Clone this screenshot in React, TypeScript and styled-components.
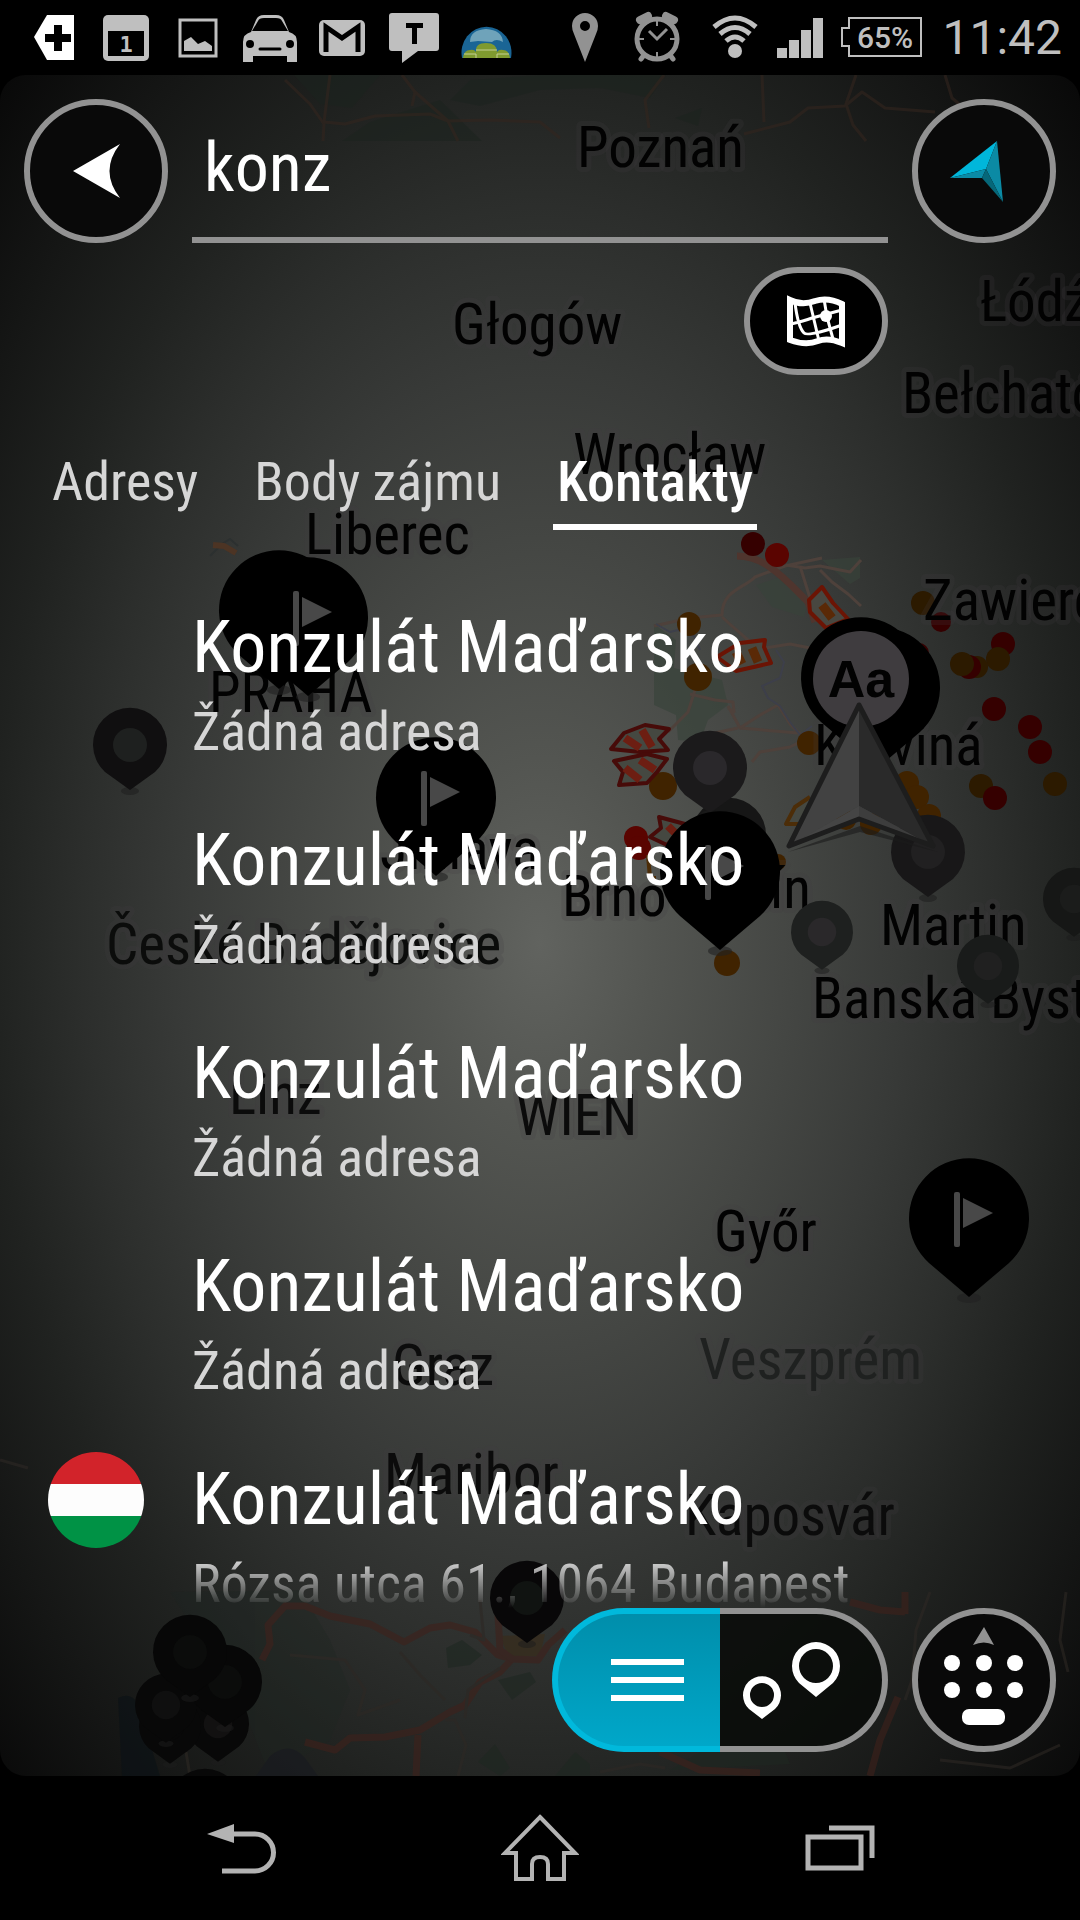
import React, { useState } from "react";
import styled, { createGlobalStyle, css } from "styled-components";

const GlobalStyle = createGlobalStyle`
  *, *::before, *::after { box-sizing: border-box; }
  html, body { margin: 0; background: #000; }
  button, input { font: inherit; color: inherit; margin: 0; }
`;

const CONDENSED = `"Roboto Condensed", Roboto, "Noto Sans", sans-serif`;
const GREY = "#929292";
const ICON = "#bfbfbf";

const Phone = styled.div`
  display: flex;
  flex-direction: column;
  height: 100vh;
  background: #000;
  color: #fff;
  font-family: ${CONDENSED};
  overflow: hidden;
`;

/* ---------- status bar ---------- */

const StatusBar = styled.header`
  display: flex;
  justify-content: space-between;
  align-items: center;
  height: 75px;
  padding: 0 18px;
`;

const StatusGroup = styled.div`
  display: flex;
  align-items: center;
`;

const StatusGlyph = styled.svg<{ $w?: number }>`
  display: block;
  width: ${(p) => p.$w ?? 72}px;
  height: 75px;
`;

const Clock = styled.time`
  margin-left: 20px;
  font: 400 48px/75px Roboto, sans-serif;
  color: ${ICON};
`;

/* ---------- app panel ---------- */

const Panel = styled.main`
  position: relative;
  isolation: isolate;
  display: flex;
  flex-direction: column;
  flex: 1;
  min-height: 0;
  padding: 24px;
  border-radius: 26px;
  overflow: hidden;
  background: radial-gradient(
    ellipse at 50% 51%,
    #61635f 0%,
    #535551 15%,
    #444643 33%,
    #383a38 47%,
    #2c2e2c 60%,
    #202220 72%,
    #151615 85%,
    #080808 100%
  );
`;

const MapCanvas = styled.svg`
  position: absolute;
  inset: 0;
  z-index: -1;
  width: 100%;
  height: 100%;
`;

const TopRow = styled.form`
  display: grid;
  grid-template-columns: 144px 1fr 144px;
  gap: 24px;
  margin: 0;
`;

const roundControl = css`
  display: flex;
  align-items: center;
  justify-content: center;
  padding: 0;
  border: 6px solid ${GREY};
  background: #090909;
  cursor: pointer;
`;

const RoundButton = styled.button`
  ${roundControl}
  width: 144px;
  height: 144px;
  border-radius: 50%;
`;

const SearchInput = styled.input`
  min-width: 0;
  height: 144px;
  padding: 0 12px;
  border: 0;
  border-bottom: 6px solid ${GREY};
  border-radius: 0;
  outline: 0;
  background: transparent;
  font-size: 68px;
`;

const MapButton = styled.button`
  ${roundControl}
  grid-column: 2;
  justify-self: end;
  width: 144px;
  height: 108px;
  border-radius: 54px;
  background: #000;
`;

const Tabs = styled.div`
  display: flex;
  gap: 48px;
  margin-top: 71px;
  padding-left: 24px;
`;

const Tab = styled.button`
  padding: 0 4px 6px;
  border: 0;
  border-bottom: 6px solid transparent;
  background: none;
  color: #d6d6d6;
  font-size: 54px;
  line-height: 72px;
  white-space: nowrap;
  cursor: pointer;

  &[aria-selected="true"] {
    color: #fff;
    font-size: 56px;
    font-weight: 500;
    border-color: #fff;
  }
`;

const Results = styled.ul`
  flex: 1;
  min-height: 0;
  margin: 0;
  padding: 70px 0 0;
  list-style: none;
  overflow: hidden;
  mask-image: linear-gradient(to top, transparent 0, #000 48px);
`;

const Result = styled.li`
  display: grid;
  grid-template-columns: 96px 1fr;
  column-gap: 48px;
  padding: 0 24px;
  margin-bottom: 45px;
`;

const Flag = styled.span<{ $bands?: string[] }>`
  grid-row: span 2;
  width: 96px;
  height: 96px;
  border-radius: 50%;
  ${(p) =>
    p.$bands &&
    css`
      background: linear-gradient(
        ${p.$bands[0]} 33%,
        ${p.$bands[1]} 33% 67%,
        ${p.$bands[2]} 67%
      );
    `}
`;

const Title = styled.span`
  font-size: 72px;
  line-height: 96px;
  white-space: nowrap;
`;

const Address = styled.span`
  color: #d6d6d6;
  font-size: 54px;
  line-height: 72px;
  white-space: nowrap;
`;

const BottomRow = styled.div`
  display: flex;
  justify-content: flex-end;
  gap: 24px;
`;

const Toggle = styled.div`
  display: flex;
`;

const ToggleHalf = styled.button<{ $side: "left" | "right" }>`
  display: flex;
  width: 168px;
  height: 144px;
  padding: 0;
  border: 6px solid ${GREY};
  background: rgba(8, 10, 8, 0.85);
  cursor: pointer;
  ${(p) =>
    p.$side === "left"
      ? "border-right: 0; border-radius: 72px 0 0 72px;"
      : "border-left: 0; border-radius: 0 72px 72px 0;"}

  &[aria-pressed="true"] {
    border-color: #00b9dc;
    background: linear-gradient(#008eab, #00a7c9);
  }
`;

const Drawing = styled.svg<{ $w: number; $h: number }>`
  display: block;
  flex: none;
  width: ${(p) => p.$w}px;
  height: ${(p) => p.$h}px;
`;

/* ---------- navigation bar ---------- */

const NavBar = styled.nav`
  display: flex;
  justify-content: center;
  height: 144px;
`;

const NavButton = styled.button`
  display: flex;
  align-items: center;
  justify-content: center;
  width: 300px;
  padding: 0;
  border: 0;
  background: none;
  cursor: pointer;
`;

/* ---------- map ---------- */

type PinProps = { x: number; y: number };

const FlagPin = ({ x, y, flag = true }: PinProps & { flag?: boolean }) => (
  <g transform={`translate(${x} ${y})`}>
    <ellipse cy="79" rx="12" ry="5" fill="#222" opacity=".6" />
    <path d="M0 78 L-40 44 A60 60 0 1 1 40 44 Z" fill="#000" />
    {flag && (
      <g fill="#484848">
        <rect x="-15" y="-27" width="6" height="55" rx="2" />
        <path d="M-6 -21 L24 -6 L-6 9 Z" />
      </g>
    )}
  </g>
);

const RingPin = ({ x, y, r = 37, fill, hole }: PinProps & { r?: number; fill: string; hole: string }) => (
  <g transform={`translate(${x} ${y}) scale(${r / 37})`}>
    <ellipse cy="46" rx="9" ry="4" fill="#1c1c1c" opacity=".5" />
    <path d="M0 45 L-25 27 A37 37 0 1 1 25 27 Z" fill={fill} />
    <circle r="17" fill={hole} />
  </g>
);

const RED = "#5a0400";
const DARKRED = "#350000";
const ORANGE = "#402300";
const BROWN = "#2c1a00";

const dots: [number, number, number, string][] = [
  [753, 544, 12, DARKRED], [777, 555, 12, RED], [689, 624, 12, ORANGE], [698, 677, 14, ORANGE],
  [663, 786, 14, ORANGE], [727, 963, 13, ORANGE], [923, 603, 12, BROWN], [941, 622, 10, DARKRED],
  [919, 653, 10, DARKRED], [1003, 644, 12, DARKRED], [998, 659, 12, BROWN], [977, 667, 11, BROWN],
  [969, 667, 12, DARKRED], [962, 664, 12, BROWN], [994, 709, 12, DARKRED], [1030, 727, 12, DARKRED],
  [1040, 752, 12, DARKRED], [1055, 784, 12, BROWN], [981, 786, 12, BROWN], [995, 798, 12, DARKRED],
  [809, 743, 12, ORANGE], [907, 783, 12, ORANGE], [917, 797, 12, ORANGE], [929, 816, 12, ORANGE],
  [871, 824, 11, ORANGE], [846, 820, 10, ORANGE], [636, 838, 12, RED], [639, 848, 12, RED], [778, 862, 8, ORANGE],
];

const cities: [string, number, number, string?][] = [
  ["Poznań", 577, 167], ["Głogów", 452, 344], ["Łódź", 980, 321], ["Bełchatów", 902, 413],
  ["Wrocław", 573, 474], ["Liberec", 305, 554], ["Zawiercie", 923, 620], ["PRAHA", 209, 712],
  ["Karviná", 814, 765], ["Jihlava", 380, 869], ["České Budějovice", 106, 964, "#0b0c0b"], ["Brno", 562, 916],
  ["Zlín", 727, 908], ["Martin", 880, 945], ["Banská Bystrica", 812, 1018], ["Linz", 229, 1114, "#0b0b0b"],
  ["WIEN", 516, 1135, "#0b0b0b"], ["Győr", 714, 1251], ["Veszprém", 699, 1379, "#1f2120"], ["Graz", 392, 1385, "#0c0c0c"],
  ["Maribor", 384, 1494, "#0b0b0b"], ["Kaposvár", 685, 1535, "#0b0b0b"],
];

const Roads = () => (
  <g fill="none" strokeLinejoin="round">
    {/* northern strip */}
    <g fill="#1b231e" opacity=".5">
      <path d="M294 75 L380 75 L352 108 L320 104 Z" />
      <path d="M450 100 L470 80 L540 75 L665 75 L650 98 L600 88 L540 90 L480 106 Z" />
      <path d="M342 141 L370 122 L440 100 L482 141 Z" />
      <path d="M675 118 L702 108 L698 126 Z" />
    </g>
    <g stroke="#33251e" strokeWidth="3" opacity=".6">
      <path d="M285 80 L310 104 L324 124 L323 141" />
      <path d="M330 75 L324 122 L345 124 L375 116 L430 114 L448 121 L490 120 L540 122 L560 138" />
      <path d="M402 75 L415 92 L448 121 L458 141" />
      <path d="M415 92 L412 106" />
      <path d="M664 75 L645 100 L649 128" />
      <path d="M744 134 L790 122 L808 108 L845 106 L862 92 L885 108 L935 112" />
      <path d="M762 75 L764 122" />
      <path d="M856 75 L846 104 L853 125 L866 141" />
      <path d="M945 75 L952 98 L990 130" />
    </g>
    {/* Ostrava region */}
    <g fill="#38433a" opacity=".65">
      <path d="M822 560 L860 557 L860 578 L850 584 Z" />
      <path d="M756 585 L778 578 L808 600 L804 617 L772 607 Z" />
      <path d="M654 624 L676 640 L674 668 L722 680 L728 705 L708 720 L700 742 L678 740 L676 715 L654 705 Z" />
    </g>
    <g stroke="#4e413b" strokeWidth="3">
      <path d="M654 626 L690 618 L722 615 C722 590 745 588 755 577 L785 566 L822 558" />
      <path d="M786 565 L805 568 L820 566 L850 572 L861 560" />
      <path d="M800 566 L810 598 L806 604" />
      <path d="M820 570 L832 582 L848 594 L861 606" />
      <path d="M722 617 L732 626 L748 640 L765 648 L790 644 L810 648" />
      <path d="M695 690 L688 712 L676 724 L668 732" />
      <path d="M690 694 L715 700 L733 702 L734 712 L728 708 M728 706 L740 728 L798 733" />
      <path d="M740 728 L760 715 L778 705 L790 724 L802 736" />
      <path d="M738 728 L710 734 M752 762 L760 752 L790 747 L804 740" />
    </g>
    <path d="M737 556 C760 556 775 570 790 584 L808 602 L815 622" stroke="#4f352e" strokeWidth="7" />
    <g stroke="#3d3f4a" strokeWidth="2">
      <path d="M776 650 L784 662 L780 678 L762 686 L768 698 L780 706 L790 722 L800 735 L812 726" />
      <path d="M656 624 L670 632 L678 630 L694 636 L700 650" />
    </g>
    <path d="M210 556 L216 550 L222 544 L230 539 L238 546" stroke="#2c3030" strokeWidth="2" />
    <path d="M213 545 L224 546 L236 553" stroke="#4c3424" strokeWidth="6" />
    {/* southern strip */}
    <g opacity=".6">
      <g fill="#1e2721">
        <path d="M170 1592 L300 1590 L330 1640 L350 1690 L330 1740 L270 1776 L240 1700 Z" opacity=".6" />
        <path d="M446 1648 L462 1640 L482 1655 L470 1665 L448 1668 Z" />
        <path d="M498 1680 L530 1672 L536 1682 L512 1700 Z" />
        <path d="M478 1762 L495 1744 L510 1768 L500 1776 Z" />
        <path d="M555 1776 L575 1752 L590 1764 L590 1776 Z" />
        <path d="M670 1770 L700 1752 L780 1740 L790 1764 Z" />
      </g>
      <path d="M118 1698 Q134 1690 140 1710 L160 1776 L122 1776 Z" fill="#0b1216" />
      <path d="M270 1756 Q290 1740 305 1758 L318 1776 L256 1776 Z" fill="#181a20" />
      <path d="M500 1636 L545 1634 L540 1656 L508 1656 Z" fill="#3a2c18" />
      <g stroke="#3f211b" strokeWidth="7">
        <path d="M262 1660 L270 1644 L268 1625 L285 1606 L305 1606 L330 1616 L370 1624 L404 1642 L430 1628 L450 1625 L475 1632 L498 1655 L512 1659 L500 1672 L480 1682 L465 1705 L450 1712 L420 1730 L385 1737 L350 1738 L335 1750 L305 1742" />
        <path d="M498 1615 L500 1650 L512 1659 L538 1660 L548 1645 L565 1630" />
        <path d="M418 1735 L416 1776" />
        <path d="M850 1602 L880 1610 L905 1612 M905 1592 L905 1614" />
        <path d="M660 1752 L700 1770 L760 1773" />
        <path d="M898 1697 L880 1740 L870 1776" />
      </g>
      <g stroke="#2d2824" strokeWidth="3">
        <path d="M290 1655 L345 1660 L365 1690 L358 1715 L400 1700" />
        <path d="M400 1652 L420 1675 L445 1700 M445 1720 L455 1720 L466 1745 L458 1776" />
        <path d="M480 1600 L484 1640 L470 1635" />
        <path d="M465 1718 L468 1690 L500 1668 M186 1752 L190 1776" />
        <path d="M930 1592 L916 1630 L912 1680 L905 1700 M1066 1592 L1060 1640 L1068 1672" />
        <path d="M600 1772 L640 1764 L665 1768" />
        <path d="M940 1760 L1010 1768 L1060 1745 M0 1460 L28 1468" />
      </g>
    </g>
  </g>
);

const Zones = () => (
  <g strokeLinejoin="round" strokeWidth="4">
    <g fill="#454841" stroke="#470b09">
      <path d="M611 749 L624 733 L645 725 L669 729 L659 739 L668 750 L640 752 Z" />
      <path d="M614 761 L647 754 L667 759 L657 772 L647 783 L619 785 L623 772 Z" />
      <path d="M659 817 L685 824 L667 845 L650 837 L661 828 Z" />
    </g>
    <g fill="none" stroke="#6d1e12" strokeWidth="8">
      <path d="M625 738 L640 748 M642 730 L652 747 M625 768 L640 780 M640 760 L655 770 M668 826 L676 834" />
    </g>
    <g fill="#484740" stroke="#6b1404">
      <path d="M822 587 L809 600 L810 612 L826 628 L848 619 L833 603 Z" />
      <path d="M717 657 L740 643 L765 640 L764 647 L771 663 L736 671 Z" />
    </g>
    <path d="M822 605 L832 618 M742 664 L736 652 M758 662 L752 648" stroke="#5a2906" strokeWidth="9" />
    <path d="M810 797 L795 807 L786 824 L799 824" fill="#454841" stroke="#4c2d08" />
    <path d="M648 855 L650 878 L656 878" fill="none" stroke="#4c2d08" />
  </g>
);

const MapBackground = () => (
  <MapCanvas viewBox="0 75 1080 1701" preserveAspectRatio="xMidYMid slice" aria-hidden="true">
    <Roads />
    {dots.map(([x, y, r, fill]) => (
      <circle key={`${x}-${y}`} cx={x} cy={y} r={r} fill={fill} />
    ))}
    <Zones />
    <g
      fontFamily={CONDENSED}
      fontSize="57"
      stroke="#3f3b3f"
      strokeOpacity=".2"
      strokeWidth="10"
      strokeLinejoin="round"
      style={{ paintOrder: "stroke" }}
    >
      {cities.map(([name, x, y, fill]) => (
        <text key={name} x={x} y={y} fill={fill ?? "#020202"}>
          {name}
        </text>
      ))}
    </g>
    <RingPin x={130} y={745} fill="#100f10" hole="#1e201f" />
    <RingPin x={729} y={835} fill="#161616" hole="#242424" />
    <RingPin x={710} y={768} fill="#1b1a1b" hole="#2a282b" />
    <RingPin x={928} y={852} fill="#181718" hole="#212021" />
    <RingPin x={822} y={932} r={31} fill="#1e201f" hole="#2a282a" />
    <RingPin x={988} y={966} r={31} fill="#191b1a" hole="#202020" />
    <RingPin x={1074} y={899} r={31} fill="#161716" hole="#1b1c1b" />
    <RingPin x={527} y={1598} fill="#080708" hole="#101311" />
    <RingPin x={205} y={1806} fill="#080808" hole="#0c0c0c" />
    <RingPin x={218} y={1724} r={31} fill="#080808" hole="#121111" />
    <RingPin x={170} y={1726} r={31} fill="#080808" hole="#080808" />
    <RingPin x={166} y={1705} r={31} fill="#080808" hole="#0f0f0f" />
    <RingPin x={225} y={1682} fill="#070707" hole="#0b0c0b" />
    <RingPin x={190} y={1652} fill="#070707" hole="#0b0c0b" />
    <FlagPin x={279} y={611} flag={false} />
    <FlagPin x={308} y={618} />
    <FlagPin x={436} y={798} />
    <FlagPin x={720} y={872} />
    <FlagPin x={969} y={1219} />
    <FlagPin x={880} y={688} flag={false} />
    <FlagPin x={861} y={678} flag={false} />
    <circle cx="861" cy="679" r="48" fill="#3f3c3f" />
    <text x="861" y="697" textAnchor="middle" fontFamily="Liberation Sans, sans-serif" fontWeight="700" fontSize="52" fill="#020202">
      Aa
    </text>
    <g>
      <path d="M788 852 L860 826 L938 852 L860 832 Z" fill="#1a1a1a" opacity=".6" />
      <path d="M859 706 L859 806 L789 846 Z" fill="#424242" />
      <path d="M859 706 L859 806 L933 846 Z" fill="#2a2a2a" />
      <path d="M789 846 L859 806 L859 819 Z" fill="#454545" />
      <path d="M933 846 L859 806 L859 819 Z" fill="#3d3d3d" />
      <path d="M859 705 L789 846 L859 819 L933 846 Z" fill="none" stroke="#1d1d1d" strokeWidth="5" strokeLinejoin="round" />
    </g>
  </MapCanvas>
);

/* ---------- status icons ---------- */

const LeftStatusIcons = () => (
  <StatusGroup aria-hidden="true">
    <StatusGlyph viewBox="0 0 72 75">
      <path d="M16 37 L29 15 H56 V60 H29 Z" fill="#fff" />
      <path d="M27 34 H53 V42 H27 Z M36 25 H44 V51 H36 Z" fill="#000" />
    </StatusGlyph>
    <StatusGlyph viewBox="0 0 72 75">
      <rect x="13" y="15" width="46" height="46" rx="5" fill={ICON} />
      <rect x="18" y="31" width="36" height="25" fill="#000" />
      <text x="36" y="52" textAnchor="middle" fontFamily="DejaVu Sans Mono, monospace" fontWeight="700" fontSize="22" fill={ICON}>
        1
      </text>
    </StatusGlyph>
    <StatusGlyph viewBox="0 0 72 75">
      <rect x="18" y="20" width="36" height="36" fill="none" stroke={ICON} strokeWidth="3" />
      <path d="M22 51 V41 L29 37 L36 44 L43 41 L50 46 V51 Z" fill={ICON} />
    </StatusGlyph>
    <StatusGlyph viewBox="0 0 72 75">
      <path d="M9 62 V42 Q9 34 17 32 L22 20 Q24 15 30 15 H42 Q48 15 50 20 L55 32 Q63 34 63 42 V62 H53 V56 H19 V62 Z" fill={ICON} />
      <path d="M18 31 L24 21 Q25 18 30 18 H42 Q47 18 48 21 L54 31 Z" fill="#000" />
      <circle cx="16" cy="44" r="4" fill="#000" />
      <circle cx="56" cy="44" r="4" fill="#000" />
      <path d="M26 49 H46" stroke="#000" strokeWidth="3" strokeLinecap="round" />
    </StatusGlyph>
    <StatusGlyph viewBox="0 0 72 75">
      <rect x="13" y="20" width="46" height="36" rx="5" fill={ICON} />
      <path d="M20 52 V27 L36 38 L52 27 V52" fill="none" stroke="#000" strokeWidth="5" />
    </StatusGlyph>
    <StatusGlyph viewBox="0 0 72 75">
      <path d="M14 13 H58 Q61 13 61 16 V48 Q61 51 58 51 H40 L24 63 V51 H14 Q11 51 11 48 V16 Q11 13 14 13 Z" fill={ICON} />
      <path d="M28 23 H45 V28 H39 V44 H34 V28 H28 Z" fill="#000" />
    </StatusGlyph>
    <StatusGlyph viewBox="0 0 72 75">
      <path d="M12 58 A25 26 0 1 1 61 58 Z" fill="#1a6595" />
      <path d="M20 42 Q20 30 36 29 Q52 30 53 42 Q46 38 42 42 L28 41 Z" fill="#6fa3ba" />
      <path d="M13 58 Q14 50 20 50 Q24 49 26 52 Q25 43 36 43 Q47 43 47 52 Q49 49 53 50 Q59 50 60 58 Z" fill="#7f9a2f" />
      <path d="M14 54 H26 V58 M59 54 H47 V58 M26 50 H47" fill="none" stroke="#c5cf95" strokeWidth="1" />
    </StatusGlyph>
  </StatusGroup>
);

const RightStatusIcons = () => (
  <StatusGroup>
    <StatusGlyph viewBox="0 0 72 75">
      <path
        fillRule="evenodd"
        d="M36 62 L25 34 Q23 30 23 26 A13 13 0 0 1 49 26 Q49 30 47 34 Z M36 21 A5 5 0 1 0 36 31 A5 5 0 1 0 36 21"
        fill={GREY}
      />
    </StatusGlyph>
    <StatusGlyph viewBox="0 0 72 75">
      <g fill="none" stroke={GREY}>
        <circle cx="36" cy="39" r="20" strokeWidth="5" />
        <path d="M19 20 L27 16 M53 20 L45 16" strokeWidth="8" strokeLinecap="round" />
        <path d="M23 55 L20 59 M49 55 L52 59" strokeWidth="5" strokeLinecap="round" />
        <path d="M36 21 V26 M36 52 V57 M18 39 H23 M49 39 H54" strokeWidth="2" />
        <path d="M28 31 L36 39 L46 29" strokeWidth="3" />
      </g>
    </StatusGlyph>
    <StatusGlyph viewBox="0 0 84 75" $w={84}>
      <circle cx="42" cy="51" r="7" fill={ICON} />
      <g fill="none" stroke={ICON} strokeWidth="5">
        <path d="M33 41 Q42 33 51 41" />
        <path d="M27 34 Q42 21 57 34" />
        <path d="M21 27 Q42 9 63 27" />
      </g>
    </StatusGlyph>
    <StatusGlyph viewBox="0 0 46 75" $w={46}>
      <path d="M0 48 H10 V58 H0 Z M12 40 H22 V58 H12 Z M24 30 H34 V58 H24 Z M36 18 H46 V58 H36 Z" fill={ICON} />
    </StatusGlyph>
    <StatusGlyph viewBox="-18 0 99 75" $w={99}>
      <path d="M8 18 H80 V56 H8 V46 H1 V28 H8 Z" fill="none" stroke={ICON} strokeWidth="2" />
      <text x="44" y="48" textAnchor="middle" fontFamily="Roboto, sans-serif" fontWeight="500" fontSize="30" fill={ICON}>
        65%
      </text>
    </StatusGlyph>
    <Clock>11:42</Clock>
  </StatusGroup>
);

/* ---------- screen ---------- */

const tabNames = ["Adresy", "Body zájmu", "Kontakty"];

const contacts: { name: string; address: string; flag?: string[] }[] = [
  { name: "Konzulát Maďarsko", address: "Žádná adresa" },
  { name: "Konzulát Maďarsko", address: "Žádná adresa" },
  { name: "Konzulát Maďarsko", address: "Žádná adresa" },
  { name: "Konzulát Maďarsko", address: "Žádná adresa" },
  {
    name: "Konzulát Maďarsko",
    address: "Rózsa utca 61., 1064 Budapest",
    flag: ["#d2232a", "#fdfdfd", "#009245"],
  },
];

export default function App() {
  const [query, setQuery] = useState("konz");
  const [tab, setTab] = useState("Kontakty");
  const [view, setView] = useState<"list" | "map">("list");

  return (
    <>
      <GlobalStyle />
      <Phone>
        <StatusBar>
          <LeftStatusIcons />
          <RightStatusIcons />
        </StatusBar>

        <Panel>
          <MapBackground />

          <TopRow onSubmit={(e) => e.preventDefault()}>
            <RoundButton type="button" aria-label="Zpět">
              <Drawing $w={132} $h={132} viewBox="6 6 132 132">
                <path d="M49 72 L96 45 Q75 72 96 99 Z" fill="#fff" />
              </Drawing>
            </RoundButton>
            <SearchInput aria-label="Hledat" value={query} onChange={(e) => setQuery(e.target.value)} />
            <RoundButton type="button" aria-label="Moje poloha">
              <Drawing $w={132} $h={132} viewBox="6 6 132 132">
                <path d="M85 42 L38 79 L74 70 Z" fill="#00b7db" />
                <path d="M38 79 L74 70 L70 79 Z" fill="#0a8ba6" />
                <path d="M85 42 L74 70 L91 103 Z" fill="#0b8aa4" />
                <path d="M74 70 L70 79 L91 103 Z" fill="#066779" />
              </Drawing>
            </RoundButton>
            <MapButton type="button" aria-label="Hledat na mapě">
              <Drawing $w={132} $h={96} viewBox="6 6 132 96">
                <g fill="none" stroke="#fff">
                  <path d="M46 33 Q58 39 71 34 Q84 30 98 37 V76 Q84 70 74 74 Q62 79 46 73 Z" strokeWidth="6" />
                  <path d="M51 36 Q54 60 60 66 Q64 70 98 58 M47 57 Q60 54 68 51 L98 43 M66 36 L75 74 M80 32 L83 50 L89 72" strokeWidth="3" />
                </g>
                <circle cx="82" cy="49" r="6" fill="#fff" />
              </Drawing>
            </MapButton>
          </TopRow>

          <Tabs role="tablist">
            {tabNames.map((name) => (
              <Tab key={name} role="tab" aria-selected={tab === name} onClick={() => setTab(name)}>
                {name}
              </Tab>
            ))}
          </Tabs>

          <Results>
            {contacts.map((contact, i) => (
              <Result key={i}>
                <Flag $bands={contact.flag} />
                <Title>{contact.name}</Title>
                <Address>{contact.address}</Address>
              </Result>
            ))}
          </Results>

          <BottomRow>
            <Toggle>
              <ToggleHalf $side="left" aria-label="Seznam" aria-pressed={view === "list"} onClick={() => setView("list")}>
                <Drawing $w={162} $h={132} viewBox="6 6 162 132">
                  <path d="M59 54 H132 M59 72 H132 M59 90 H132" stroke="#fff" strokeWidth="6" />
                </Drawing>
              </ToggleHalf>
              <ToggleHalf $side="right" aria-label="Mapa" aria-pressed={view === "map"} onClick={() => setView("map")}>
                <Drawing $w={162} $h={132} viewBox="0 6 162 132">
                  <g fill="#fff" fillRule="evenodd">
                    <path d="M96 89 L79 75 A24 24 0 1 1 113 75 Z M96 41 A17 17 0 1 0 96 75 A17 17 0 1 0 96 41" />
                    <path d="M42 111 L29 101 A19 19 0 1 1 55 101 Z M42 75 A12 12 0 1 0 42 99 A12 12 0 1 0 42 75" />
                  </g>
                </Drawing>
              </ToggleHalf>
            </Toggle>
            <RoundButton type="button" aria-label="Klávesnice">
              <Drawing $w={132} $h={132} viewBox="6 6 132 132">
                <path d="M72 19 L82 37 Q72 32 61 37 Z" fill={GREY} />
                <g fill="#fff">
                  {[55, 82].map((cy) => [40, 72, 103].map((cx) => <circle key={`${cx}-${cy}`} cx={cx} cy={cy} r="8" />))}
                  <rect x="50" y="101" width="43" height="16" rx="7" />
                </g>
              </Drawing>
            </RoundButton>
          </BottomRow>
        </Panel>

        <NavBar>
          <NavButton aria-label="Zpět">
            <Drawing $w={78} $h={72} viewBox="0 0 78 72">
              <path d="M6 22 L33 12 V31 Z" fill="#b3b3b3" />
              <path d="M32 22 H54 A18 18 0 0 1 54 59 H21" fill="none" stroke="#b3b3b3" strokeWidth="5" />
            </Drawing>
          </NavButton>
          <NavButton aria-label="Domů">
            <Drawing $w={78} $h={72} viewBox="0 0 78 72">
              <path
                d="M39 5 L74 41 H63 V67 H47 V52 Q47 45 39 45 Q31 45 31 52 V67 H15 V41 H4 Z"
                fill="none"
                stroke="#b3b3b3"
                strokeWidth="4"
              />
            </Drawing>
          </NavButton>
          <NavButton aria-label="Poslední aplikace">
            <Drawing $w={78} $h={72} viewBox="0 0 78 72">
              <g fill="none" stroke="#b3b3b3" strokeWidth="5">
                <rect x="7" y="25" width="53" height="31" />
                <path d="M28 16 H71 V46" />
              </g>
            </Drawing>
          </NavButton>
        </NavBar>
      </Phone>
    </>
  );
}
